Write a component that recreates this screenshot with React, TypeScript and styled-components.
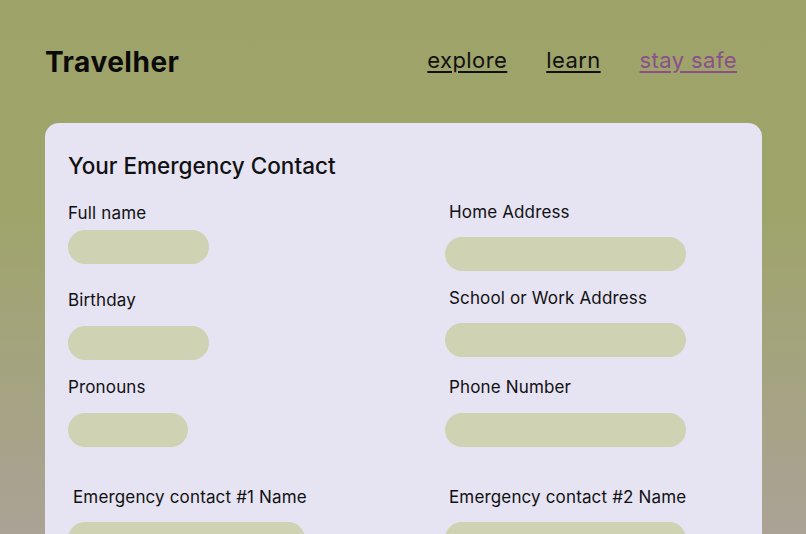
import React from "react";
import styled, { createGlobalStyle } from "styled-components";

const GlobalStyle = createGlobalStyle`
  html, body {
    margin: 0;
    padding: 0;
    height: 100%;
  }
  body {
    font-family: "Inter", "Noto Sans", sans-serif;
    background: linear-gradient(180deg, #9ea369 0%, #9fa46b 40%, #aaa396 100%);
    background-attachment: fixed;
    overflow: hidden;
    color: #111;
  }
`;

const Page = styled.div`
  min-height: 100vh;
  padding: 0 44px 0 45px;
  box-sizing: border-box;
`;

const Header = styled.header`
  height: 123px;
  display: flex;
  align-items: center;
  justify-content: space-between;
  padding-right: 25px;
`;

const Logo = styled.h1`
  margin: 0;
  font-size: 28px;
  font-weight: 700;
  letter-spacing: 0.5px;
  color: #0a0a0a;
`;

const Nav = styled.nav`
  display: flex;
  gap: 39px;
  margin-bottom: 4px;
`;

const NavLink = styled.a<{ $active?: boolean }>`
  font-size: 22px;
  letter-spacing: 0.4px;
  color: ${(p) => (p.$active ? "#8b4f8b" : "#111")};
  text-decoration: underline;
  text-underline-offset: 3px;
  text-decoration-thickness: 1.5px;
  cursor: pointer;
`;

const Card = styled.section`
  background: #e6e3f3;
  border-radius: 14px;
  padding: 28px 23px 40px;
  min-height: 500px;
  box-sizing: border-box;
`;

const Title = styled.h2`
  margin: 0;
  font-size: 22.5px;
  line-height: 30px;
  font-weight: 500;
`;

const Columns = styled.div`
  display: grid;
  grid-template-columns: 377px 1fr;
`;

const Column = styled.div`
  display: flex;
  flex-direction: column;
`;

const Field = styled.div<{ $top: number; $gap: number }>`
  display: flex;
  flex-direction: column;
  margin-top: ${(p) => p.$top}px;
  gap: ${(p) => p.$gap}px;
`;

const Label = styled.label<{ $indent: number }>`
  font-size: 17px;
  line-height: 24px;
  letter-spacing: 0.15px;
  padding-left: ${(p) => p.$indent}px;
`;

const Input = styled.input<{ $width: number }>`
  width: ${(p) => p.$width}px;
  height: 34px;
  border: none;
  border-radius: 17px;
  background: #cfd3b3;
  outline: none;
  padding: 0 16px;
  box-sizing: border-box;
  font-family: inherit;
`;

type FieldDef = {
  label: string;
  top: number;
  gap: number;
  width: number;
  indent: number;
};

const left: FieldDef[] = [
  { label: "Full name", top: 20, gap: 5, width: 141, indent: 0 },
  { label: "Birthday", top: 24, gap: 14, width: 141, indent: 0 },
  { label: "Pronouns", top: 15, gap: 14, width: 120, indent: 0 },
  { label: "Emergency contact #1 Name", top: 38, gap: 13, width: 237, indent: 5 },
];

const right: FieldDef[] = [
  { label: "Home Address", top: 19, gap: 13, width: 241, indent: 4 },
  { label: "School or Work Address", top: 15, gap: 13, width: 241, indent: 4 },
  { label: "Phone Number", top: 18, gap: 14, width: 241, indent: 4 },
  { label: "Emergency contact #2 Name", top: 38, gap: 13, width: 241, indent: 4 },
];

const renderField = (f: FieldDef) => (
  <Field key={f.label} $top={f.top} $gap={f.gap}>
    <Label $indent={f.indent}>{f.label}</Label>
    <Input $width={f.width} />
  </Field>
);

const App = () => {
  return (
    <>
      <GlobalStyle />
      <Page>
        <Header>
          <Logo>Travelher</Logo>
          <Nav>
            <NavLink>explore</NavLink>
            <NavLink>learn</NavLink>
            <NavLink $active>stay safe</NavLink>
          </Nav>
        </Header>
        <Card>
          <Title>Your Emergency Contact</Title>
          <Columns>
            <Column>{left.map(renderField)}</Column>
            <Column>{right.map(renderField)}</Column>
          </Columns>
        </Card>
      </Page>
    </>
  );
};

export default App;
